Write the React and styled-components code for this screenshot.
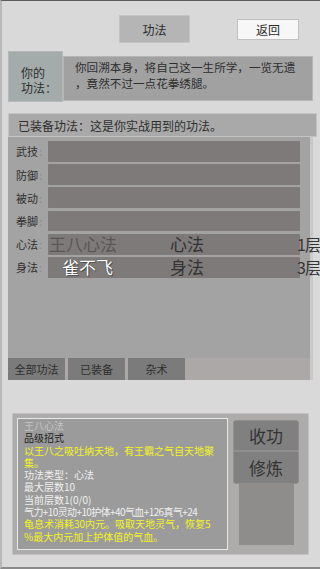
import React from "react";
import styled, { createGlobalStyle } from "styled-components";

const GlobalStyle = createGlobalStyle`
  html, body {
    margin: 0;
    padding: 0;
  }
  body {
    background: #d8d8d8;
    font-family: "Noto Sans CJK SC", "Noto Sans", sans-serif;
  }
`;

const Screen = styled.div`
  width: 320px;
  height: 569px;
  box-sizing: border-box;
  border-top: 1px solid #5a5a5a;
  border-bottom: 2px solid #8a8a8a;
  border-left: 2px solid #b8b8b8;
  background: #d9d9d9;
  overflow: hidden;
  display: flex;
  flex-direction: column;
`;

const Header = styled.div`
  display: flex;
  align-items: flex-start;
  height: 50px;
  padding-top: 14px;
  box-sizing: border-box;
`;

const TitleButton = styled.div`
  margin-left: 117px;
  width: 71px;
  height: 28px;
  box-sizing: border-box;
  background: #b5b5b5;
  border: 1px solid #c4c4c4;
  display: flex;
  align-items: center;
  justify-content: center;
  font-size: 12px;
  color: #2a2a2a;
`;

const BackButton = styled.div`
  margin-left: 47px;
  margin-top: 4px;
  width: 62px;
  height: 21px;
  box-sizing: border-box;
  background: #f7f7f7;
  border: 1px solid #c0c0c0;
  display: flex;
  align-items: center;
  justify-content: center;
  font-size: 12px;
  color: #2a2a2a;
`;

const Intro = styled.div`
  display: flex;
  margin-left: 6px;
  height: 51px;
`;

const IntroLabel = styled.div`
  width: 55px;
  box-sizing: border-box;
  background: #a3abab;
  border: 1px solid #b4baba;
  padding: 13px 0 0 12px;
  font-size: 12px;
  line-height: 15px;
  color: #2e2e2e;
`;

const IntroText = styled.div`
  margin-top: 5px;
  width: 250px;
  height: 45px;
  box-sizing: border-box;
  background: #a1a1a1;
  border: 1px solid #b5b5b5;
  padding: 2px 4px 0 11px;
  font-size: 11.6px;
  line-height: 16px;
  color: #2e2e2e;
`;

const SectionHeader = styled.div`
  margin: 11px 3px 0 6px;
  height: 24px;
  box-sizing: border-box;
  background: #a9a9a9;
  border: 1px solid #c4c4c4;
  padding-left: 9px;
  display: flex;
  align-items: center;
  font-size: 12px;
  color: #2e2e2e;
`;

const Panel = styled.div`
  margin-left: 6px;
  width: 305px;
  height: 243px;
  box-sizing: border-box;
  background: #a3a3a3;
  border-right: 3px solid #c9c9c9;
  display: flex;
  flex-direction: column;
`;

const SlotList = styled.div`
  flex: 1;
  display: flex;
  flex-direction: column;
  gap: 2.4px;
  padding: 4px 0 0 8px;
`;

const SlotRow = styled.div`
  display: flex;
  align-items: center;
  height: 20.8px;
`;

const SlotLabel = styled.div`
  width: 32px;
  font-size: 11px;
  color: #2e2e2e;
  white-space: nowrap;
  &::after {
    content: ":";
    color: #8a8a8a;
    margin-left: 1px;
  }
`;

const SlotBar = styled.div`
  position: relative;
  width: 252px;
  height: 100%;
  background: #7e7a7a;
  border-radius: 1px;
  font-size: 17px;
  line-height: 20px;
  white-space: nowrap;
`;

const SkillName = styled.span`
  position: absolute;
  left: ${(p) => (p.$hl ? "14px" : "1px")};
  top: 0;
  color: ${(p) => (p.$hl ? "#ffffff" : "#595656")};
  text-shadow: ${(p) =>
    p.$hl ? "0 0 1px #333, 1px 1px 0 #555" : "none"};
`;

const SkillType = styled.span`
  position: absolute;
  left: 122px;
  top: 0;
  color: #333;
`;

const SkillLevel = styled.span`
  position: absolute;
  left: 249px;
  top: 0;
  font-size: 16px;
  letter-spacing: -1px;
  color: #333;
`;

const Tabs = styled.div`
  display: flex;
  gap: 3px;
  height: 22px;
  background: #aca8a8;
`;

const Tab = styled.div`
  width: 57px;
  background: #7b7b7b;
  display: flex;
  align-items: center;
  justify-content: center;
  font-size: 11px;
  color: #2e2e2e;
`;

const Detail = styled.div`
  margin: 33px 0 0 10px;
  width: 297px;
  height: 142px;
  box-sizing: border-box;
  background: #aeabab;
  border: 1px solid #c2c0c0;
  padding: 4px;
  display: flex;
  gap: 5px;
`;

const InfoBox = styled.div`
  width: 211px;
  box-sizing: border-box;
  background: #9b9b9b;
  border: 1px solid #e8e8e8;
  padding: 1px 6px 0 6px;
  font-size: 10px;
  line-height: 12.3px;
  color: #f0f0f0;
`;

const InfoLine = styled.div`
  color: ${(p) => p.$color || "#f0f0f0"};
  letter-spacing: ${(p) => (p.$tight ? "-0.6px" : "0")};
`;

const Actions = styled.div`
  display: flex;
  flex-direction: column;
  align-items: center;
  padding-top: 2px;
`;

const ActionButton = styled.div`
  width: 66px;
  height: ${(p) => p.$h}px;
  box-sizing: border-box;
  background: #808080;
  border: 1px solid #8f8f8f;
  border-radius: ${(p) => (p.$top ? "3px 3px 0 0" : "0 0 3px 3px")};
  display: flex;
  align-items: center;
  justify-content: center;
  font-size: 17px;
  color: #333;
`;

const ActionFill = styled.div`
  width: 55px;
  height: 61px;
  background: #8f8c8c;
`;

const slots = [
  { label: "武技" },
  { label: "防御" },
  { label: "被动" },
  { label: "拳脚" },
  { label: "心法", name: "王八心法", type: "心法", level: "1层" },
  { label: "身法", name: "雀不飞", type: "身法", level: "3层", hl: true },
];

export default function App() {
  return (
    <>
      <GlobalStyle />
      <Screen>
        <Header>
          <TitleButton>功法</TitleButton>
          <BackButton>返回</BackButton>
        </Header>

        <Intro>
          <IntroLabel>
            你的
            <br />
            功法：
          </IntroLabel>
          <IntroText>
            你回溯本身，将自己这一生所学，一览无遗
            <br />
            ，竟然不过一点花拳绣腿。
          </IntroText>
        </Intro>

        <SectionHeader>已装备功法：这是你实战用到的功法。</SectionHeader>

        <Panel>
          <SlotList>
            {slots.map((s) => (
              <SlotRow key={s.label}>
                <SlotLabel>{s.label}</SlotLabel>
                <SlotBar>
                  {s.name && <SkillName $hl={s.hl}>{s.name}</SkillName>}
                  {s.type && <SkillType>{s.type}</SkillType>}
                  {s.level && <SkillLevel>{s.level}</SkillLevel>}
                </SlotBar>
              </SlotRow>
            ))}
          </SlotList>
          <Tabs>
            <Tab>全部功法</Tab>
            <Tab>已装备</Tab>
            <Tab>杂术</Tab>
          </Tabs>
        </Panel>

        <Detail>
          <InfoBox>
            <InfoLine $color="#c4c4c4">王八心法</InfoLine>
            <InfoLine $color="#222">品级招式</InfoLine>
            <InfoLine $color="#f4f41c">
              以王八之吸吐纳天地，有王霸之气自天地聚集。
            </InfoLine>
            <InfoLine>功法类型：心法</InfoLine>
            <InfoLine>最大层数10</InfoLine>
            <InfoLine>当前层数1(0/0)</InfoLine>
            <InfoLine $tight>气力+10灵动+10护体+40气血+126真气+24</InfoLine>
            <InfoLine $color="#f4f41c">
              龟息术消耗30内元。吸取天地灵气，恢复5
              <br />
              %最大内元加上护体值的气血。
            </InfoLine>
          </InfoBox>
          <Actions>
            <ActionButton $h={31} $top>
              收功
            </ActionButton>
            <ActionButton $h={33}>修炼</ActionButton>
            <ActionFill />
          </Actions>
        </Detail>
      </Screen>
    </>
  );
}
